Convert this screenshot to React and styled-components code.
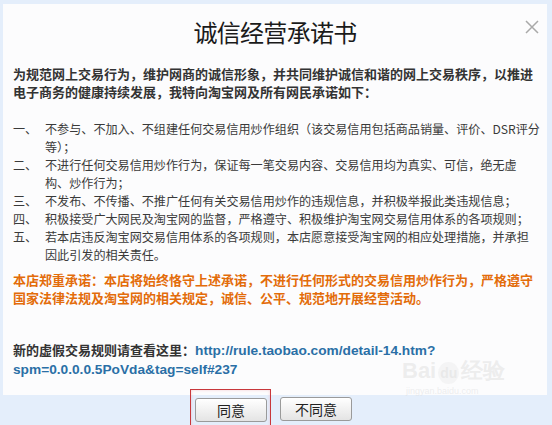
import React from 'react';
import styled, { createGlobalStyle } from 'styled-components';

const items = [
  ['一、', ['不参与、不加入、不组建任何交易信用炒作组织（该交易信用包括商品销量、评价、DSR评分', '等）；']],
  ['二、', ['不进行任何交易信用炒作行为，保证每一笔交易内容、交易信用均为真实、可信，绝无虚', '构、炒作行为；']],
  ['三、', ['不发布、不传播、不推广任何有关交易信用炒作的违规信息，并积极举报此类违规信息；']],
  ['四、', ['积极接受广大网民及淘宝网的监督，严格遵守、积极维护淘宝网交易信用体系的各项规则；']],
  ['五、', ['若本店违反淘宝网交易信用体系的各项规则，本店愿意接受淘宝网的相应处理措施，并承担', '因此引发的相关责任。']],
];

export default function App() {
  return (
    <Page>
      <GlobalStyle />
      <Panel>
        <Close aria-label="关闭">
          <svg width="14" height="14" viewBox="0 0 14 14">
            <path d="M1 1L13 13M13 1L1 13" stroke="#a9a9a9" strokeWidth="1.5" />
          </svg>
        </Close>
        <Title>诚信经营承诺书</Title>

        <Intro>
          为规范网上交易行为，维护网商的诚信形象，并共同维护诚信和谐的网上交易秩序，以推进
          <br />
          电子商务的健康持续发展，我特向淘宝网及所有网民承诺如下：
        </Intro>

        <List>
          {items.map(([num, lines]) => (
            <Item key={num}>
              <Num>{num}</Num>
              <ItemText>
                {lines.map((l, i) => (
                  <div key={i}>{l}</div>
                ))}
              </ItemText>
            </Item>
          ))}
        </List>

        <Promise>
          本店郑重承诺：本店将始终恪守上述承诺，不进行任何形式的交易信用炒作行为，严格遵守
          <br />
          国家法律法规及淘宝网的相关规定，诚信、公平、规范地开展经营活动。
        </Promise>

        <Rule>
          新的虚假交易规则请查看这里：
          <Link href="#">
            http://rule.taobao.com/detail-14.htm?
            <br />
            spm=0.0.0.0.5PoVda&amp;tag=self#237
          </Link>
        </Rule>
      </Panel>

      <Footer>
        <Highlight>
          <Button>同意</Button>
        </Highlight>
        <Button $offset={2}>不同意</Button>
      </Footer>

      <Watermark>
        Bai<Paw>du</Paw>经验
        <small>jingyan.baidu.com</small>
      </Watermark>
    </Page>
  );
}

const GlobalStyle = createGlobalStyle`
  body {
    margin: 0;
    background: #e4eefb;
    font-family: "Noto Sans CJK SC", "Noto Sans", sans-serif;
  }
`;

const Page = styled.div`
  position: relative;
  width: 552px;
  height: 425px;
  overflow: hidden;
  background: #e4eefb;
  padding-top: 4px;
  box-sizing: border-box;
`;

const Panel = styled.div`
  position: relative;
  margin: 0 5px 0 3px;
  height: 391px;
  box-sizing: border-box;
  padding: 14px 10px 0 10px;
  background: #fcfcfd;
  color: #333;
`;

const Close = styled.div`
  position: absolute;
  top: 11px;
  right: 8px;
  width: 14px;
  height: 14px;
  cursor: pointer;
`;

const Title = styled.h1`
  margin: 0;
  text-align: center;
  font-size: 24px;
  font-weight: 400;
  letter-spacing: -0.7px;
  line-height: 28px;
  color: #1a1a1a;
`;

const Intro = styled.p`
  margin: 19px 0 0;
  font-size: 13px;
  line-height: 18px;
  font-weight: 700;
  white-space: nowrap;
  color: #333;
`;

const List = styled.div`
  margin-top: 19px;
  font-size: 12.1px;
  line-height: 18px;
  color: #3a3a3a;
`;

const Item = styled.div`
  display: grid;
  grid-template-columns: 32px 1fr;
`;

const Num = styled.span`
  white-space: nowrap;
`;

const ItemText = styled.div`
  white-space: nowrap;
`;

const Promise = styled.p`
  margin: 7px 0 0;
  font-size: 13px;
  line-height: 18px;
  font-weight: 700;
  white-space: nowrap;
  color: #e36c0a;
`;

const Rule = styled.p`
  margin: 34px 0 0;
  font-size: 13px;
  line-height: 18px;
  font-weight: 700;
  color: #333;
  white-space: nowrap;
`;

const Link = styled.a`
  font-family: "Liberation Sans", Arial, sans-serif;
  font-size: 13.7px;
  color: #2a6fa6;
  text-decoration: none;
`;

const Footer = styled.div`
  position: relative;
  display: flex;
  align-items: flex-start;
  gap: 9px;
  padding-left: 190px;
  margin-top: -6px;
`;

const Highlight = styled.div`
  border: 1px solid #c8383c;
  border-bottom: none;
  padding: 7px 3px 10px 4px;
  box-shadow: inset 0 0 3px rgba(230, 120, 130, 0.35);
`;

const Button = styled.button`
  width: 72px;
  height: 24px;
  margin-top: ${p => (p.$offset ? p.$offset + 6 : 0)}px;
  padding: 0;
  border: 1px solid #9a9a9a;
  border-radius: 3px;
  background: linear-gradient(#ffffff, #e4e4e4);
  box-shadow: inset 0 1px 0 #fff;
  font-family: "Noto Sans CJK SC", sans-serif;
  font-size: 14px;
  color: #222;
  line-height: 22px;
`;

const Watermark = styled.div`
  position: absolute;
  left: 402px;
  top: 360px;
  font-family: "Liberation Sans", sans-serif;
  font-size: 22px;
  font-weight: 700;
  color: rgba(222, 222, 222, 0.5);
  line-height: 22px;
  pointer-events: none;

  small {
    display: block;
    font-size: 9px;
    font-weight: 400;
    line-height: 14px;
    padding-left: 4px;
  }
`;

const Paw = styled.span`
  display: inline-block;
  border-radius: 50%;
  padding: 0 2px;
  margin: 0 2px;
  background: rgba(235, 235, 235, 0.45);
  font-size: 14px;
`;
